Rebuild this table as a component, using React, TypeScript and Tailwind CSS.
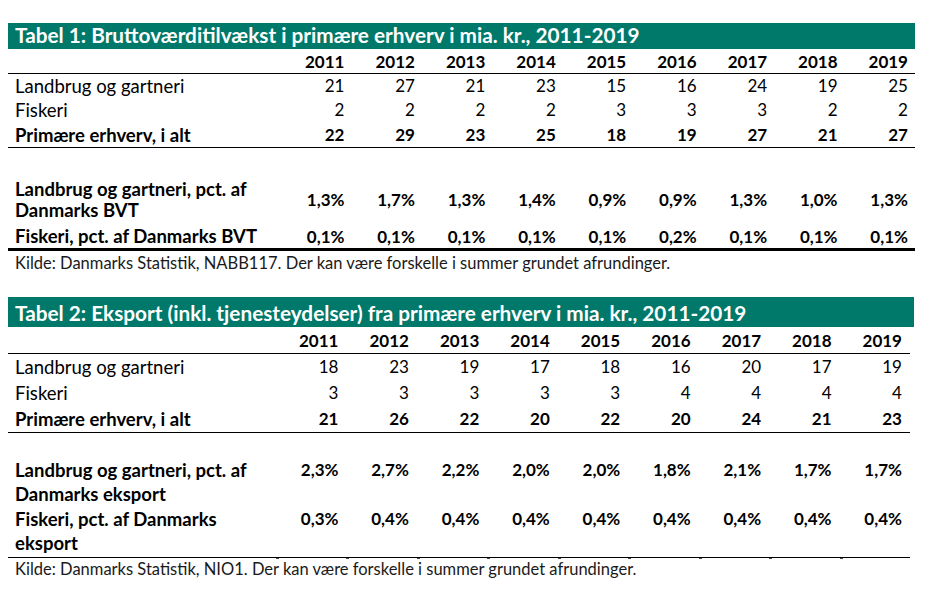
const YEARS = ["2011", "2012", "2013", "2014", "2015", "2016", "2017", "2018", "2019"];

const T1_ROWS = [
	{ label: "Landbrug og gartneri", values: ["21", "27", "21", "23", "15", "16", "24", "19", "25"] },
	{ label: "Fiskeri", values: ["2", "2", "2", "2", "3", "3", "3", "2", "2"] },
	{ label: "Primære erhverv, i alt", values: ["22", "29", "23", "25", "18", "19", "27", "21", "27"], bold: true },
];

const T2_ROWS = [
	{ label: "Landbrug og gartneri", values: ["18", "23", "19", "17", "18", "16", "20", "17", "19"] },
	{ label: "Fiskeri", values: ["3", "3", "3", "3", "3", "4", "4", "4", "4"] },
	{ label: "Primære erhverv, i alt", values: ["21", "26", "22", "20", "22", "20", "24", "21", "23"], bold: true },
];

const T1_PCT = ["1,3%", "1,7%", "1,3%", "1,4%", "0,9%", "0,9%", "1,3%", "1,0%", "1,3%"];
const T1_FISK = ["0,1%", "0,1%", "0,1%", "0,1%", "0,1%", "0,2%", "0,1%", "0,1%", "0,1%"];
const T2_PCT = ["2,3%", "2,7%", "2,2%", "2,0%", "2,0%", "1,8%", "2,1%", "1,7%", "1,7%"];
const T2_FISK = ["0,3%", "0,4%", "0,4%", "0,4%", "0,4%", "0,4%", "0,4%", "0,4%", "0,4%"];

const GRID1 = "grid grid-cols-[273px_repeat(9,minmax(0,1fr))]";
const GRID2 = "grid grid-cols-[268px_repeat(9,minmax(0,1fr))]";

function Table1() {
	return (
		<section className="w-[907px]">
			<div className="flex h-[26px] items-end bg-[#00786a] pb-[1.5px] pl-[7px] text-[20.75px] font-bold leading-[25px] text-white">
				Tabel 1: Bruttoværditilvækst i primære erhverv i mia. kr., 2011-2019
			</div>

			<div className={`${GRID1} h-[25px] border-b border-black text-[17px] font-bold leading-[25px]`}>
				<div />
				{YEARS.map((y) => (
					<div key={y} className="pr-[7px] text-right">{y}</div>
				))}
			</div>

			<div className="border-b border-black text-[17px] leading-[24.33px]">
				{T1_ROWS.map((row) => (
					<div key={row.label} className={`${GRID1} ${row.bold ? "font-bold" : ""}`}>
						<div className="pl-[7px] text-[18.5px]">{row.label}</div>
						{row.values.map((v, i) => (
							<div key={i} className="pr-[7px] text-right">{v}</div>
						))}
					</div>
				))}
			</div>

			<div className="h-[31px]" />

			{/* procent-rækker */}
			<div className={`${GRID1} text-[17px] font-bold leading-[21px]`}>
				<div className="whitespace-nowrap pl-[7px] text-[18.5px]">
					Landbrug og gartneri, pct. af
					<br />
					Danmarks BVT
				</div>
				{T1_PCT.map((v, i) => (
					<div key={i} className="self-center pr-[7px] text-right">{v}</div>
				))}
			</div>
			<div className={`${GRID1} border-b-[3px] border-black pt-[5px] pb-[1px] text-[17px] font-bold leading-[21px]`}>
				<div className="whitespace-nowrap pl-[7px] text-[18.5px]">Fiskeri, pct. af Danmarks BVT</div>
				{T1_FISK.map((v, i) => (
					<div key={i} className="pr-[7px] text-right">{v}</div>
				))}
			</div>

			<p className="mt-[2px] pl-[7px] text-[16.5px] leading-[20px] text-[#1a1a1a]">
				Kilde: Danmarks Statistik, NABB117. Der kan være forskelle i summer grundet afrundinger.
			</p>
		</section>
	);
}

function Table2() {
	return (
		<section className="mt-[24px] w-[906px]">
			<div className="flex h-[30px] items-end bg-[#00786a] pb-[0.5px] pl-[7px] text-[20.75px] font-bold leading-[25px] text-white">
				Tabel 2: Eksport (inkl. tjenesteydelser) fra primære erhverv i mia. kr., 2011-2019
			</div>

			<div className="w-[902px]">
				<div className={`${GRID2} h-[27px] border-b border-black text-[17px] font-bold leading-[27px]`}>
					<div />
					{YEARS.map((y) => (
						<div key={y} className="pr-[8px] text-right">{y}</div>
					))}
				</div>

				<div className="border-b border-black text-[17px] leading-[26px]">
					{T2_ROWS.map((row) => (
						<div key={row.label} className={`${GRID2} ${row.bold ? "font-bold" : ""}`}>
							<div className="pl-[7px] text-[18.5px]">{row.label}</div>
							{row.values.map((v, i) => (
								<div key={i} className="pr-[8px] text-right">{v}</div>
							))}
						</div>
					))}
				</div>

				<div className="h-[25px]" />

				<div className={`${GRID2} text-[17px] font-bold leading-[24.5px]`}>
					<div className="whitespace-nowrap pl-[7px] text-[18.5px]">
						Landbrug og gartneri, pct. af
						<br />
						Danmarks eksport
					</div>
					{T2_PCT.map((v, i) => (
						<div key={i} className="pr-[8px] text-right">{v}</div>
					))}
				</div>
				<div className={`${GRID2} border-b border-black pb-[1px] text-[17px] font-bold leading-[24.5px]`}>
					<div className="whitespace-nowrap pl-[7px] text-[18.5px]">
						Fiskeri, pct. af Danmarks
						<br />
						eksport
					</div>
					{T2_FISK.map((v, i) => (
						<div key={i} className="pr-[8px] text-right">{v}</div>
					))}
				</div>

				{/* små streger ved kolonnegrænserne */}
				<div className={`${GRID2} h-[1px]`}>
					<div />
					{YEARS.map((y) => (
						<div key={y} className="h-[1px] w-[3px] bg-black/70" />
					))}
				</div>
			</div>

			<p className="pl-[7px] text-[16.5px] leading-[20px] text-[#1a1a1a]">
				Kilde: Danmarks Statistik, NIO1. Der kan være forskelle i summer grundet afrundinger.
			</p>
		</section>
	);
}

export default function App() {
	return (
		<div className="min-h-screen w-[937px] bg-white pt-[23px] pl-[8px] font-['Lato',sans-serif] text-black">
			<Table1 />
			<Table2 />
		</div>
	);
}
